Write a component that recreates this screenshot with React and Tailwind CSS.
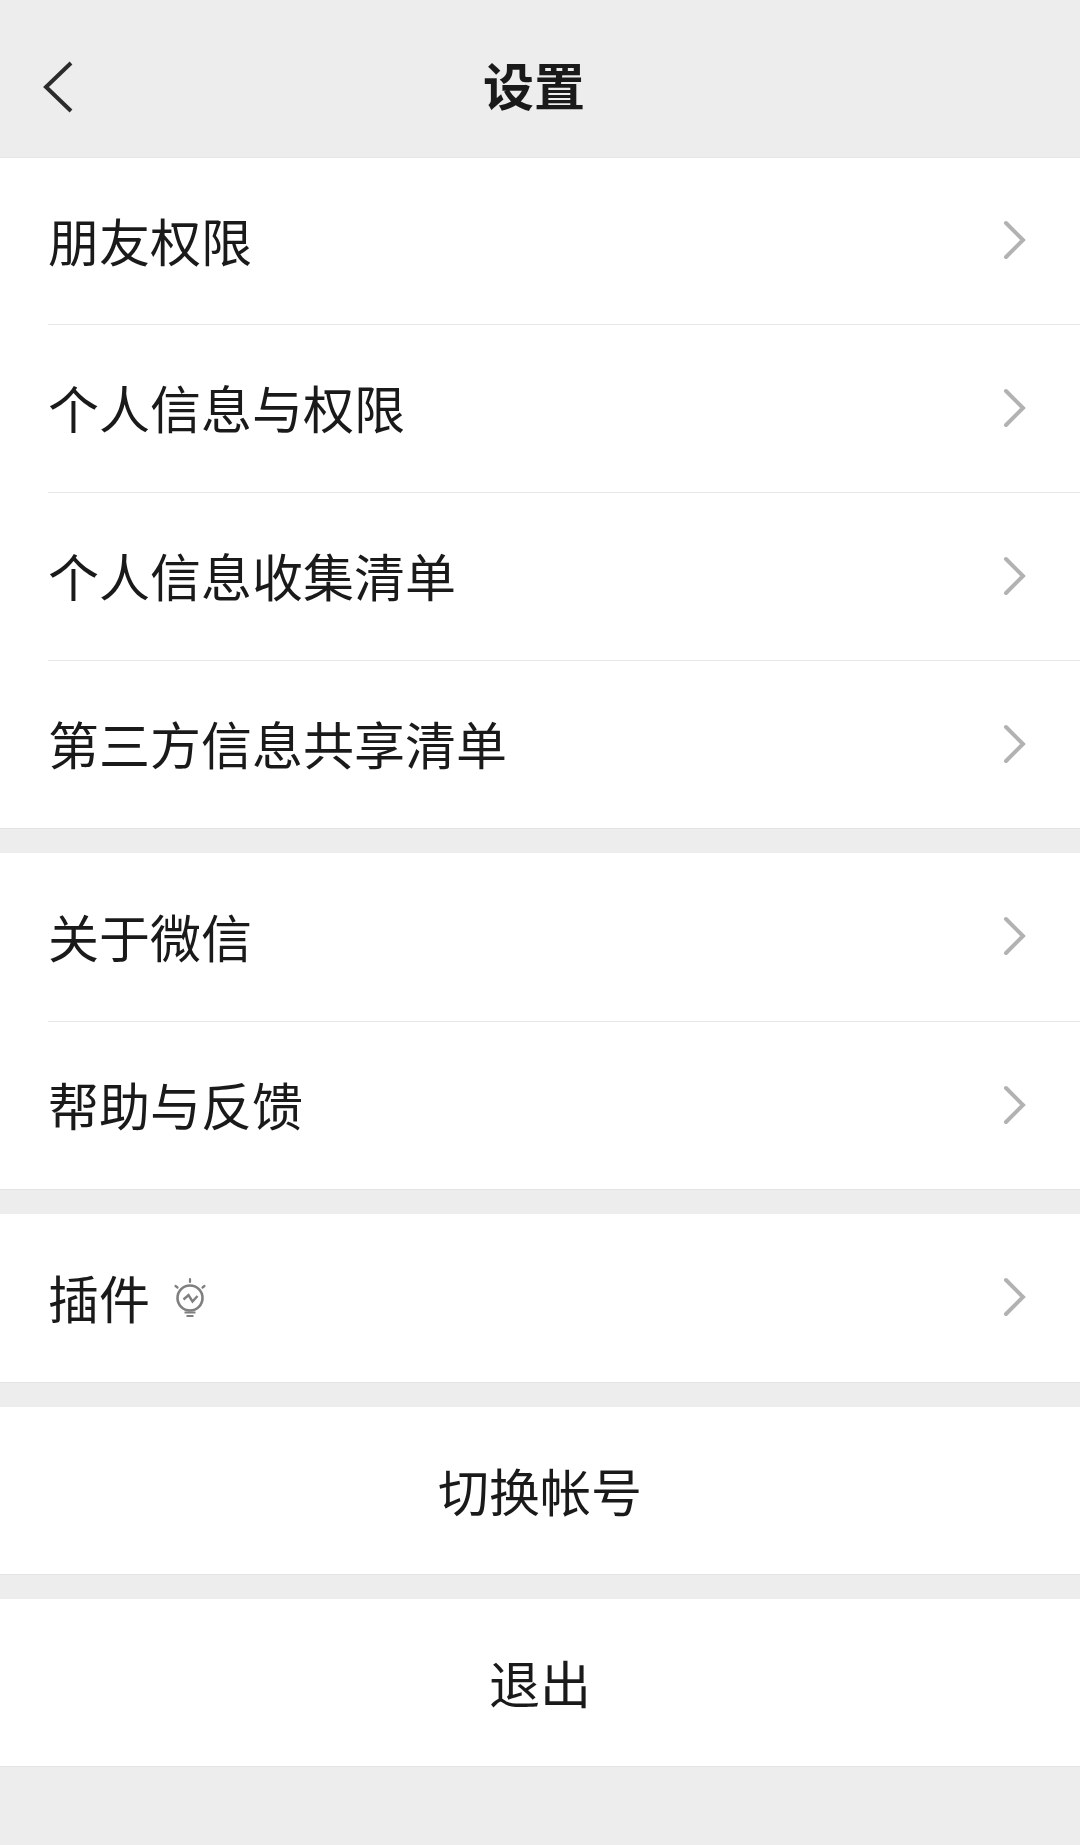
// WeChat settings screen
const BackIcon = () => (
  <svg width="32" height="54" viewBox="0 0 32 54" fill="none" className="block">
    <path d="M30 3 L5 27 L30 51" stroke="#2b2b2b" strokeWidth="4" />
  </svg>
);

const ChevronIcon = () => (
  <svg width="24" height="40" viewBox="0 0 24 40" fill="none" className="block shrink-0">
    <path d="M3 3 L20 20 L3 37" stroke="#b2b2b2" strokeWidth="4" strokeLinecap="round" />
  </svg>
);

const PluginIcon = () => (
  <svg width="34" height="40" viewBox="0 0 34 40" fill="none" stroke="#7f7f7f" strokeWidth="2.2" className="block">
    <circle cx="17" cy="21" r="12.5" strokeWidth="2.6" />
    <path d="M17 2 V5 M2.5 9 L4.5 10.5 M31.5 9 L29.5 10.5" strokeLinecap="round" />
    <path d="M10.5 22.5 L15.5 18 L19.5 24.5 L24.5 19" strokeWidth="2.4" />
    <path d="M11.5 35.5 H22.5 M13.5 39 H20.5" />
  </svg>
);

function Row({ label, icon, divider, centered, h = 'h-[167px]' }) {
  if (centered) {
    return (
      <div className={`flex items-center justify-center bg-white pb-[1px] ${h}`}>
        <span>{label}</span>
      </div>
    );
  }
  return (
    <div className="bg-white pl-[48px]">
      <div className={`flex items-center justify-between pb-[2px] pr-[53px] ${h} ${divider ? 'border-b border-[#e8e8e8]' : ''}`}>
        <div className="flex items-center gap-[23px]">
          <span>{label}</span>
          {icon}
        </div>
        <ChevronIcon />
      </div>
    </div>
  );
}

function Group({ items }) {
  return (
    <section className="border-b border-[#e3e3e3]">
      {items.map((item, i) => (
        <Row key={item.label} {...item} divider={i < items.length - 1} />
      ))}
    </section>
  );
}

export default function App() {
  return (
    <div className="flex h-[1845px] w-[1080px] flex-col overflow-hidden bg-[#ededed] font-['Noto_Sans_CJK_SC',sans-serif] text-[51px] leading-none text-[#1a1a1a]">
      <header className="relative flex h-[158px] shrink-0 items-center justify-center border-b border-[#e6e6e6] pr-[12px] pt-[11px]">
        <div className="absolute left-[41px] top-[60px]">
          <BackIcon />
        </div>
        <h1 className="text-[51px] font-bold text-[#1a1a1a]">设置</h1>
      </header>

      <div className="flex flex-col gap-[24px]">
        <Group
          items={[
            { label: '朋友权限' },
            { label: '个人信息与权限', h: 'h-[168px]' },
            { label: '个人信息收集清单', h: 'h-[168px]' },
            { label: '第三方信息共享清单' },
          ]}
        />
        <Group items={[{ label: '关于微信', h: 'h-[169px]' }, { label: '帮助与反馈' }]} />
        <Group items={[{ label: '插件', icon: <PluginIcon />, h: 'h-[168px]' }]} />
        <Group items={[{ label: '切换帐号', centered: true }]} />
        <Group items={[{ label: '退出', centered: true }]} />
      </div>
    </div>
  );
}
